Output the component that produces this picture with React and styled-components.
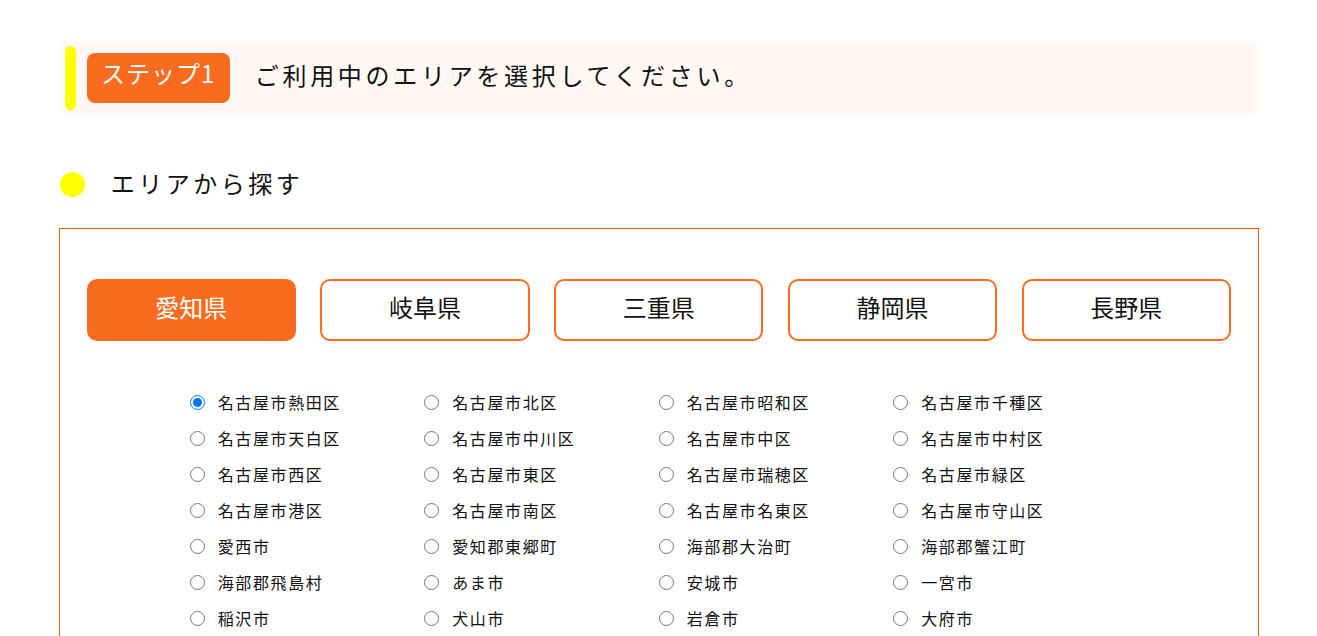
import React, { useState } from "react";
import styled, { createGlobalStyle } from "styled-components";

const GlobalStyle = createGlobalStyle`
  html, body { margin: 0; padding: 0; background: #fff; }
  body {
    font-family: "Noto Sans CJK JP", "Noto Sans", sans-serif;
    color: #111;
    overflow-x: hidden;
  }
`;

const Page = styled.main`
  width: 1200px;
  margin: 0 auto;
  padding-top: 41px;
  padding-left: 0.5px;
`;

const StepBanner = styled.div`
  display: flex;
  align-items: center;
  height: 74px;
  padding: 0 6px;
  background: #fff8f4;
  border-radius: 10px;
`;

const StepBar = styled.span`
  width: 11px;
  height: 64px;
  border-radius: 6px;
  background: #ffff00;
  flex: none;
`;

const StepBadge = styled.span`
  display: flex;
  align-items: center;
  justify-content: center;
  box-sizing: border-box;
  width: 143px;
  height: 50px;
  padding-bottom: 11px;
  margin-left: 11px;
  border-radius: 8px;
  background: #f96b1f;
  color: #fff;
  font-size: 24px;
  line-height: 24px;
  letter-spacing: 1px;
`;

const StepTitle = styled.h1`
  margin: 0 0 0 25px;
  padding-bottom: 7px;
  font-size: 24px;
  font-weight: 400;
  line-height: 24px;
  letter-spacing: 3.7px;
  color: #111;
`;

const SectionHeading = styled.h2`
  display: flex;
  align-items: center;
  gap: 26px;
  margin: 57px 0 0 1px;
  font-size: 24px;
  font-weight: 400;
  line-height: 21px;
  letter-spacing: 3.5px;
  color: #111;
`;

const HeadingText = styled.span`
  padding-bottom: 4px;
`;

const Dot = styled.span`
  width: 25px;
  height: 25px;
  border-radius: 50%;
  background: #ffff00;
  flex: none;
`;

const AreaBox = styled.section`
  margin-top: 31px;
  border: 1px solid #d0600c;
  padding: 50px 27px 40px;
`;

const PrefTabs = styled.div`
  display: flex;
  gap: 24.5px;
`;

const PrefButton = styled.button`
  flex: 1;
  box-sizing: border-box;
  height: 62px;
  border-radius: 10px;
  border: 2px solid #f96b1f;
  background: ${(p) => (p.$active ? "#f96b1f" : "#fff")};
  color: ${(p) => (p.$active ? "#fff" : "#111")};
  font-family: inherit;
  font-size: 24px;
  line-height: 24px;
  padding: 0 0 7px;
  cursor: pointer;
`;

const CityGrid = styled.div`
  display: grid;
  grid-template-columns: repeat(4, 234.5px);
  justify-content: center;
  margin-top: 43px;
  margin-left: -27px;
  margin-right: -27px;
`;

const CityItem = styled.label`
  display: flex;
  align-items: center;
  gap: 13px;
  height: 36px;
  font-size: 16px;
  letter-spacing: 1.6px;
  color: #111;
  cursor: pointer;
`;

const Radio = styled.input`
  margin: 0;
  width: 15px;
  height: 15px;
  flex: none;
`;

const prefs = ["愛知県", "岐阜県", "三重県", "静岡県", "長野県"];

const cities = [
  "名古屋市熱田区", "名古屋市北区", "名古屋市昭和区", "名古屋市千種区",
  "名古屋市天白区", "名古屋市中川区", "名古屋市中区", "名古屋市中村区",
  "名古屋市西区", "名古屋市東区", "名古屋市瑞穂区", "名古屋市緑区",
  "名古屋市港区", "名古屋市南区", "名古屋市名東区", "名古屋市守山区",
  "愛西市", "愛知郡東郷町", "海部郡大治町", "海部郡蟹江町",
  "海部郡飛島村", "あま市", "安城市", "一宮市",
  "稲沢市", "犬山市", "岩倉市", "大府市",
];

export default function App() {
  const [pref, setPref] = useState("愛知県");
  const [city, setCity] = useState("名古屋市熱田区");
  return (
    <>
      <GlobalStyle />
      <Page>
        <StepBanner>
          <StepBar />
          <StepBadge>ステップ1</StepBadge>
          <StepTitle>ご利用中のエリアを選択してください。</StepTitle>
        </StepBanner>
        <SectionHeading>
          <Dot />
          <HeadingText>エリアから探す</HeadingText>
        </SectionHeading>
        <AreaBox>
          <PrefTabs>
            {prefs.map((p) => (
              <PrefButton key={p} $active={p === pref} onClick={() => setPref(p)}>
                {p}
              </PrefButton>
            ))}
          </PrefTabs>
          <CityGrid>
            {cities.map((c) => (
              <CityItem key={c}>
                <Radio
                  type="radio"
                  name="city"
                  checked={c === city}
                  onChange={() => setCity(c)}
                />
                {c}
              </CityItem>
            ))}
          </CityGrid>
        </AreaBox>
      </Page>
    </>
  );
}
